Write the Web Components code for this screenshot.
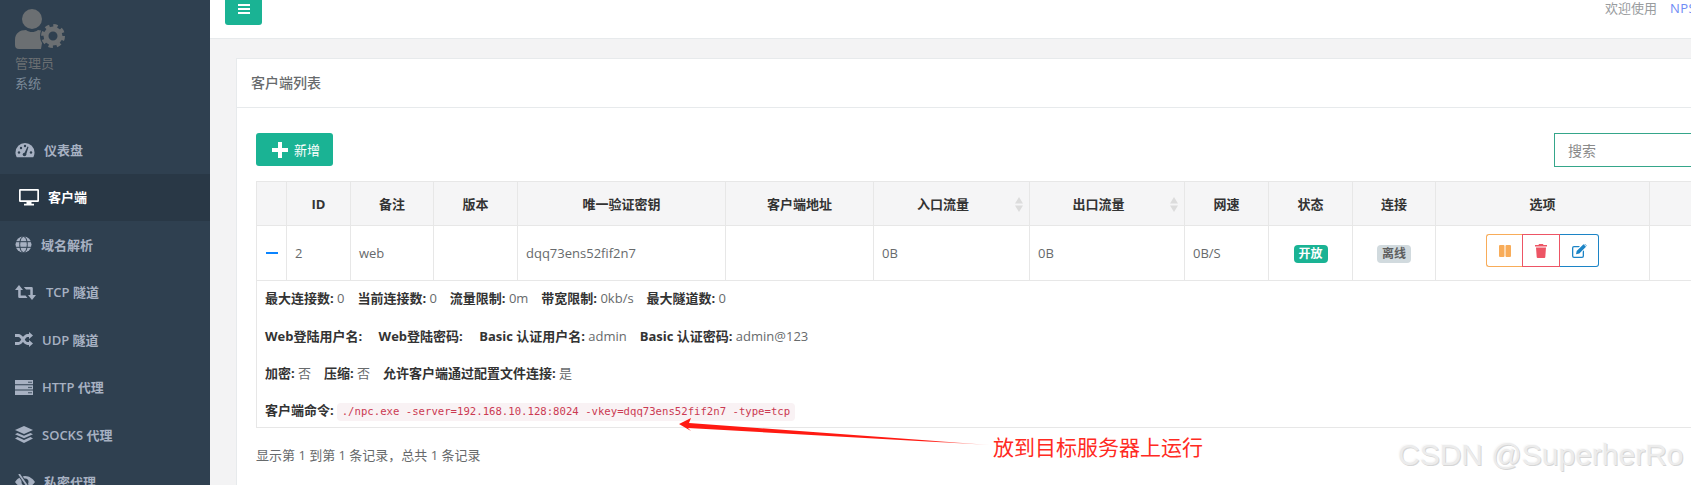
<!DOCTYPE html>
<html lang="zh"><head><meta charset="utf-8"><title>客户端列表</title>
<style>
html,body{margin:0;padding:0;width:1691px;height:485px;overflow:hidden;background:#f3f3f4}
body{font:13px/20px "Open Sans","Noto Sans CJK SC",sans-serif;color:#676a6c}
</style></head><body>
<app-shell>
  <side-bar>
    <nav-item slot="nav" style="--w:29px"><svg slot="icon" width="20" height="16" viewBox="0 0 20 16"><path fill="#a7b1c2" d="M10 1a9.5 9.5 0 0 0-9.5 9.5c0 1.8.5 3.4 1.3 4.8h16.4c.8-1.4 1.3-3 1.3-4.8A9.5 9.5 0 0 0 10 1Z"/><g fill="#2f4050"><circle cx="4" cy="10.5" r="1.2"/><circle cx="6" cy="6" r="1.2"/><circle cx="10" cy="4" r="1.2"/><circle cx="16" cy="10.5" r="1.2"/><circle cx="9.5" cy="12.5" r="1.8"/><path d="M9 12 12.5 4.5l1 .4-2.5 8Z"/></g></svg>仪表盘</nav-item>
    <nav-item slot="nav" active style="--pad:19px;--w:29px"><svg slot="icon" width="20" height="18" viewBox="0 0 20 18"><path fill="#fff" d="M1.5 1h17A1.3 1.3 0 0 1 20 2.3v10.4a1.3 1.3 0 0 1-1.500 1.300H12.500v1.800h2.500V17.500H5V15.800h2.500V14H1.500A1.300 1.300 0 0 1 0 12.700V2.300A1.300 1.300 0 0 1 1.500 1Zm.2 1.800v9.500h16.600V2.800Z"/></svg>客户端</nav-item>
    <nav-item slot="nav" style="--w:26px"><svg slot="icon" width="17" height="17" viewBox="0 0 17 17"><circle cx="8.500" cy="8.500" r="8" fill="#a7b1c2"/><g fill="none" stroke="#2f4050" stroke-width="1"><ellipse cx="8.500" cy="8.500" rx="3.800" ry="8"/><path d="M1 5.700h15M1 11.300h15"/></g></svg>域名解析</nav-item>
    <nav-item slot="nav" style="--w:31px"><svg slot="icon" width="21" height="15" viewBox="0 0 21 15"><path fill="#a7b1c2" d="M4 0 8 5H5.700V10.500H10.500L12.500 13H4.500a1.300 1.300 0 0 1-1.300-1.300V5H0ZM8.800 2H16.500A1.300 1.300 0 0 1 17.800 3.300V10H21L17 15 13 10H15.300V4.500H11Z"/></svg>TCP 隧道</nav-item>
    <nav-item slot="nav" style="--w:27px"><svg slot="icon" width="18" height="15" viewBox="0 0 18 15"><g fill="none" stroke="#a7b1c2" stroke-width="2.800"><path d="M0 3.500H3.500C7.500 3.500 8.500 11.500 12.500 11.500H14.500"/><path d="M0 11.500H3.500C7.500 11.500 8.500 3.500 12.500 3.500H14.500"/></g><path fill="#a7b1c2" d="M14 0 18 3.500 14 7ZM14 8 18 11.500 14 15Z"/></svg>UDP 隧道</nav-item>
    <nav-item slot="nav" style="--w:27px"><svg slot="icon" width="18" height="15" viewBox="0 0 18 15"><path fill="#a7b1c2" fill-rule="evenodd" d="M0 0H18V4.300H0ZM0 5.300H18V9.600H0ZM0 10.600H18V15H0Z"/><g fill="#2f4050"><circle cx="14" cy="2.200" r=".8"/><circle cx="16" cy="2.200" r=".8"/><circle cx="14" cy="7.500" r=".8"/><circle cx="16" cy="7.500" r=".8"/><circle cx="14" cy="12.800" r=".8"/><circle cx="16" cy="12.800" r=".8"/></g></svg>HTTP 代理</nav-item>
    <nav-item slot="nav" style="--w:27px"><svg slot="icon" width="18" height="17" viewBox="0 0 18 17"><path fill="#a7b1c2" d="M9 0 18 4 9 8 0 4ZM2.500 6.900 9 9.800 15.500 6.900 18 8.200 9 12.300 0 8.200ZM2.500 11.100 9 14 15.500 11.100 18 12.400 9 17 0 12.400Z"/></svg>SOCKS 代理</nav-item>
    <nav-item slot="nav" style="--w:29px"><svg slot="icon" width="20" height="16" viewBox="0 0 20 16"><path fill="#a7b1c2" d="M10 2C5.500 2 2 5 0 8c2 3 5.500 6 10 6s8-3 10-6c-2-3-5.500-6-10-6Z"/><circle cx="10" cy="8" r="3.500" fill="#2f4050"/><path stroke="#2f4050" stroke-width="3.500" d="M4 0 15 16"/><path stroke="#a7b1c2" stroke-width="1.800" d="M4 0 15 16"/></svg>私密代理</nav-item>
  </side-bar>
  <main-area>
    <top-bar></top-bar>
    <list-card title-text="客户端列表">
      <list-toolbar></list-toolbar>
      <client-table></client-table>
      <p class="foot" style="margin:17px 0 0;color:#676a6c">显示第 1 到第 1 条记录，总共 1 条记录</p>
    </list-card>
  </main-area>
  <note-overlay slot="over"></note-overlay>
</app-shell>
<script>
const def=(name,html,extra)=>{customElements.define(name,class extends HTMLElement{
  constructor(){super();const r=this.attachShadow({mode:"open"});const t=document.createElement("template");t.innerHTML=html;r.appendChild(t.content.cloneNode(true));}
  connectedCallback(){if(extra)extra(this)}
})};
def("app-shell",`<style>:host{display:flex;position:relative;width:1900px;height:485px;overflow:hidden}</style><slot></slot><slot name="over"></slot>`);
def("side-bar",`<style>:host{display:block;flex:none;width:210px;height:485px;background:#2f4050;overflow:hidden}
.p{height:126px;box-sizing:border-box;padding:9px 0 0 15px;color:#6b6f72;line-height:20px}
svg{display:block;margin-bottom:4px}.r{color:#6b6f72;height:19px;line-height:19px}.s{height:19px;line-height:20px;color:#7c8a99}</style>
<div class="p"><svg width="52" height="41" viewBox="0 0 52 41"><circle cx="17" cy="10" r="10" fill="#6b6f72"/><path fill="#6b6f72" d="M0 31c0-7 5-10 11-10 2 1.500 4 2 6 2s4-.5 6-2c2 0 4 .500 6 1.500L26 40H4a4 4 0 0 1-4-4Z"/><circle cx="38" cy="27" r="13" fill="#2f4050"/><circle cx="38" cy="27" r="7" fill="none" stroke="#6b6f72" stroke-width="5"/><circle cx="38" cy="27" r="10" fill="none" stroke="#6b6f72" stroke-width="4" stroke-dasharray="4.200 3.650"/></svg>
<div class="r">管理员</div><div class="s">系统</div></div><slot name="nav"></slot>`);
def("nav-item",`<style>:host{display:flex;align-items:center;height:47.5px;box-sizing:border-box;padding-left:var(--pad,15px);color:#a7b1c2;font-weight:600;font-size:13px}
:host([active]){background:#293846;color:#fff}.i{flex:none;width:var(--w,29px);display:flex;align-items:center}</style><span class="i"><slot name="icon"></slot></span><slot></slot>`);
def("main-area",`<style>:host{display:block;flex:none;width:1690px}</style><slot></slot>`);
def("top-bar",`<style>:host{display:flex;justify-content:space-between;height:38px;border-bottom:1px solid #e7eaec;background:#fff;padding-left:15px;width:1466px;overflow:hidden;box-sizing:content-box;color:#999c9e}
.b{width:37px;height:25px;background:#1ab394;border-radius:0 0 3px 3px;display:flex;align-items:center;justify-content:center;padding-bottom:7px;box-sizing:border-box}
.w{white-space:nowrap;line-height:16px;flex:none;width:86px;overflow:hidden}a{color:#6f8cf5;margin-left:13px;letter-spacing:.5px}</style>
<div class="b"><svg width="12" height="10" viewBox="0 0 12 10"><path fill="#fff" d="M0 0H12V2H0ZM0 4H12V6H0ZM0 8H12V10H0Z"/></svg></div><div class="w">欢迎使用<a>NPS</a></div>`);
def("list-card",`<style>:host{display:block;margin:19px 0 0 26px;background:#fff;border:1px solid #e7eaec;border-right:0;height:600px;width:1600px}
h5{margin:0;height:49px;box-sizing:border-box;padding:0 14px;line-height:48px;font-size:14px;font-weight:500;color:#676a6c;border-bottom:1px solid #e7eaec}
.c{padding:25px 19px}</style><h5 id="t"></h5><div class="c"><slot></slot></div>`,el=>{el.shadowRoot.getElementById("t").textContent=el.getAttribute("title-text")});
def("list-toolbar",`<style>:host{display:flex;justify-content:space-between;height:34px;margin-bottom:14px;align-items:flex-start}
.add{width:77px;height:33px;background:#1ab394;border-radius:3px;color:#fff;display:flex;align-items:center;padding-left:16px;box-sizing:border-box;gap:6px}
.s{width:264px;height:34px;box-sizing:border-box;border:1px solid #35a68a;padding-left:13px;line-height:34px;font-size:14px;color:#8a8a8a}</style>
<div class="add"><svg width="16" height="16" viewBox="0 0 16 16"><path fill="#fff" d="M6 0h4v6h6v4h-6v6H6v-6H0V6h6Z"/></svg>新增</div><div class="s">搜索</div>`);
def("sort-mark",`<style>:host{position:absolute;right:6px;top:15px;width:8px;height:15px}</style><svg width="8" height="15" viewBox="0 0 8 15"><path fill="#dcdcdc" d="M4 0 8 6.500H0ZM0 8.500H8L4 15Z"/></svg>`);
def("state-tag",`<style>:host{display:inline-block;width:34px;height:18px;line-height:18px;border-radius:4px;text-align:center;font-size:12px;font-weight:700;background:var(--bg);color:var(--fg);vertical-align:middle}</style><slot></slot>`);
def("act-group",`<style>:host{display:inline-flex;height:33px;vertical-align:middle;margin-top:-5px}
span{display:flex;align-items:center;justify-content:center;box-sizing:border-box;height:33px;background:#fff;border:1px solid}
.a{width:36px;border-color:#f8ac59;border-radius:3px 0 0 3px;border-right:0}.b{width:38px;border-color:#ed5565}.c{width:39px;border-color:#1c84c6;border-radius:0 3px 3px 0;border-left:0}</style>
<span class="a"><svg width="12" height="12" viewBox="0 0 12 12"><path fill="#f8ac59" d="M1 0h3.500a1 1 0 0 1 1 1v10a1 1 0 0 1-1 1H1a1 1 0 0 1-1-1V1a1 1 0 0 1 1-1ZM7.500 0H11a1 1 0 0 1 1 1v10a1 1 0 0 1-1 1H7.500a1 1 0 0 1-1-1V1a1 1 0 0 1 1-1Z"/></svg></span>
<span class="b"><svg width="12" height="14" viewBox="0 0 12 14"><path fill="#ed5565" d="M4 0H8L8.500 1H12V2.500H0V1H3.500ZM1 3.500H11L10.300 13a1 1 0 0 1-1 1H2.700a1 1 0 0 1-1-1Z"/></svg></span>
<span class="c"><svg width="15" height="14" viewBox="0 0 15 14"><path fill="#1c84c6" d="M2 2H8L6.700 3.300H2a.7.7 0 0 0-.7.7V12c0 .4.300.7.7.7H10c.4 0 .7-.3.7-.7V7.500L12 6.200V12a2 2 0 0 1-2 2H2a2 2 0 0 1-2-2V4a2 2 0 0 1 2-2Z"/><path fill="#1c84c6" d="M4 10.300 4.700 7 11.500.3 14 2.700 7.300 9.500ZM12.200 0 13 0 15 2 14.700 2.300Z"/></svg></span>`);
def("client-table",`<style>:host{display:block;width:1544px}
table{border-collapse:collapse;table-layout:fixed;width:1544px;color:#676a6c}
th,td{border:1px solid #e7e7e7;padding:0 8px;box-sizing:border-box}
th{height:44px;background:#f5f5f6;color:#333;font-weight:700;text-align:center;position:relative}
th.st{padding-right:25px}
td{height:55px}.c{text-align:center}
.m{display:block;width:12px;height:2px;background:#0a84ff;margin-left:1px}
.d{height:147px;padding:7px 8px 6px;vertical-align:top}
.d div{height:20px;line-height:20px;margin-bottom:17.67px;white-space:nowrap;color:#676a6c}.d div:nth-child(3){margin-bottom:16.67px}.d div:last-child{margin:0}
b{font-weight:700;color:#333}i{font-style:normal;display:inline-block;width:var(--g,9.5px)}i.w{width:13px}
code{display:inline-block;height:18px;line-height:18px;padding:0 5px;border-radius:4px;background:#f9f2f4;color:#cb3a52;font:10.65px/18px "DejaVu Sans Mono","Liberation Mono",monospace;margin-left:3px;vertical-align:0}</style>
<table><colgroup><col style="width:30px"><col style="width:64px"><col style="width:83px"><col style="width:84px"><col style="width:208px"><col style="width:148px"><col style="width:156px"><col style="width:155px"><col style="width:84px"><col style="width:84px"><col style="width:83px"><col style="width:214px"><col style="width:151px"></colgroup>
<thead><tr><th></th><th>ID</th><th>备注</th><th>版本</th><th>唯一验证密钥</th><th>客户端地址</th><th class="st">入口流量<sort-mark></sort-mark></th><th class="st">出口流量<sort-mark></sort-mark></th><th>网速</th><th>状态</th><th>连接</th><th>选项</th><th></th></tr></thead>
<tbody><tr><td><span class="m"></span></td><td>2</td><td>web</td><td></td><td>dqq73ens52fif2n7</td><td></td><td>0B</td><td>0B</td><td>0B/S</td><td class="c"><state-tag style="--bg:#1ab394;--fg:#fff">开放</state-tag></td><td class="c"><state-tag style="--bg:#d1dade;--fg:#5e5e5e">离线</state-tag></td><td class="c"><act-group></act-group></td><td></td></tr>
<tr><td colspan="13" class="d">
<div><b>最大连接数:</b> 0<i></i> <b>当前连接数:</b> 0<i></i> <b>流量限制:</b> 0m<i></i> <b>带宽限制:</b> 0kb/s<i></i> <b>最大隧道数:</b> 0</div>
<div><b>Web登陆用户名:</b><i class="w"></i> <b>Web登陆密码:</b><i class="w"></i> <b>Basic 认证用户名:</b> admin<i></i> <b>Basic 认证密码:</b> admin@123</div>
<div><b>加密:</b> 否<i></i> <b>压缩:</b> 否<i></i> <b>允许客户端通过配置文件连接:</b> 是</div>
<div><b>客户端命令:</b><code>./npc.exe -server=192.168.10.128:8024 -vkey=dqq73ens52fif2n7 -type=tcp</code></div>
</td></tr></tbody></table>`);
def("note-overlay",`<style>:host{position:absolute;left:0;top:0;width:1691px;height:485px;pointer-events:none}
svg{position:absolute;left:0;top:0}
.n{position:absolute;left:993px;top:432px;font-size:21px;line-height:30px;color:#ff2a22;white-space:nowrap}
.w{position:absolute;left:1398px;top:439px;font:30px/32px "Liberation Sans",sans-serif;color:#ececec;text-shadow:1px 1px 0 #d6d6d6,-1px -1px 0 #fafafa;white-space:nowrap}</style>
<svg width="1691" height="485"><defs><linearGradient id="g" x1="679" y1="424" x2="990" y2="445" gradientUnits="userSpaceOnUse"><stop offset="0" stop-color="#ff1a12"/><stop offset=".8" stop-color="#ff1a12"/><stop offset="1" stop-color="#ffd0cc"/></linearGradient></defs><path fill="url(#g)" d="M679 424 691 418 689 423 990 445 688 428 691 431Z"/></svg>
<div class="n">放到目标服务器上运行</div><div class="w">CSDN @SuperherRo</div>`);
</script>
</body></html>
